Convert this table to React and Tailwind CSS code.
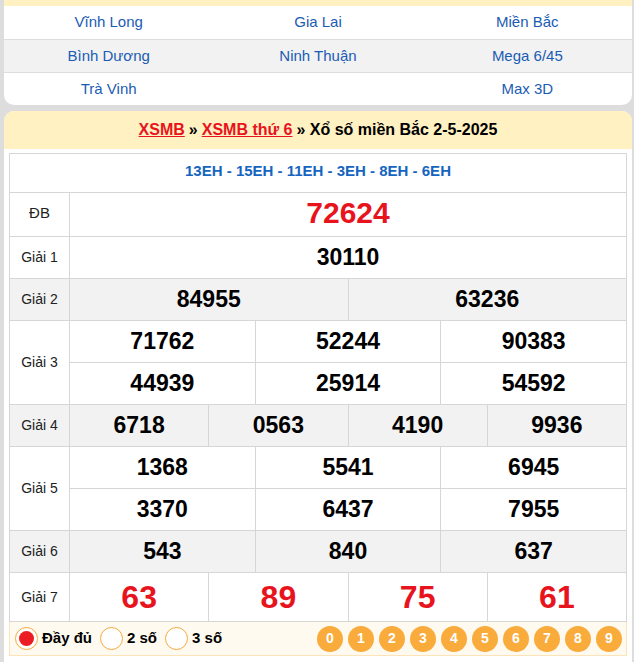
import React from 'react';

const SANS = "font-['Liberation_Sans',Arial,sans-serif]";

const NAV = [
  ['Vĩnh Long', 'Gia Lai', 'Miền Bắc'],
  ['Bình Dương', 'Ninh Thuận', 'Mega 6/45'],
  ['Trà Vinh', '', 'Max 3D'],
];

// mỗi giải: danh sách các hàng con, mỗi hàng con là mảng số
const PRIZES = [
  { label: 'Giải 1', rows: [['30110']] },
  { label: 'Giải 2', rows: [['84955', '63236']], gray: true },
  { label: 'Giải 3', rows: [['71762', '52244', '90383'], ['44939', '25914', '54592']] },
  { label: 'Giải 4', rows: [['6718', '0563', '4190', '9936']], gray: true },
  { label: 'Giải 5', rows: [['1368', '5541', '6945'], ['3370', '6437', '7955']] },
  { label: 'Giải 6', rows: [['543', '840', '637']], gray: true },
];

function PrizeRow({ label, rows, gray }) {
  return (
    <div className={`flex border-t border-[#d6d6d6] ${gray ? 'bg-[#f2f2f2]' : 'bg-white'}`}>
      <div className="w-[60px] shrink-0 border-r border-[#d6d6d6] flex items-center justify-center text-[14px] text-[#222]">
        {label}
      </div>
      <div className="flex-1 flex flex-col">
        {rows.map((r, i) => (
          <div key={i} className={`flex ${i > 0 ? 'border-t border-[#d6d6d6] h-[42px]' : 'h-[41px]'}`}>
            {r.map((n, j) => (
              <div
                key={j}
                className={`flex-1 flex items-center justify-center text-[23px] font-bold text-black ${j > 0 ? 'border-l border-[#d6d6d6]' : ''}`}
              >
                {n}
              </div>
            ))}
          </div>
        ))}
      </div>
    </div>
  );
}

function Radio({ checked, label }) {
  return (
    <div className="flex items-center gap-[4px]">
      <div className="w-[23px] h-[23px] rounded-full border border-[#f7a93b] bg-white flex items-center justify-center">
        {checked && <div className="w-[15px] h-[15px] rounded-full bg-[#ec1c24]" />}
      </div>
      <span className="text-[15px] font-bold text-black">{label}</span>
    </div>
  );
}

export default function App() {
  return (
    <div className={`min-h-[662px] bg-[#dddddd] pl-[4px] pr-[2px] ${SANS}`}>
      {/* các tỉnh */}
      <div className="bg-white border-t-[6px] border-[#fff1c2] rounded-b-[10px] overflow-hidden">
        {NAV.map((row, i) => (
          <div
            key={i}
            className={`grid grid-cols-3 h-[33px] ${i > 0 ? 'border-t border-[#dddddd]' : ''} ${i === 1 ? 'bg-[#f2f2f2]' : ''}`}
          >
            {row.map((t, j) => (
              <div key={j} className="flex items-center justify-center text-[15px] text-[#1a5cb3]">
                {t}
              </div>
            ))}
          </div>
        ))}
      </div>

      {/* kết quả */}
      <div className="mt-[6px] bg-white rounded-t-[10px] overflow-hidden pb-[8px]">
        <div className="h-[38px] bg-[#fff1c2] flex items-center justify-center text-[16px] font-bold text-black">
          <a className="text-[#e8141d] underline">XSMB</a>
          <span className="mx-[4px]">»</span>
          <a className="text-[#e8141d] underline">XSMB thứ 6</a>
          <span className="ml-[4px]">» Xổ số miền Bắc 2-5-2025</span>
        </div>

        <div className="px-[5px] pt-[4px]">
          <div className="border border-[#d6d6d6]">
            <div className="h-[38px] flex items-center justify-center text-[15px] font-bold text-[#1565c0] pb-[3px]">
              13EH - 15EH - 11EH - 3EH - 8EH - 6EH
            </div>
            <div className="flex border-t border-[#d6d6d6] h-[44px]">
              <div className="w-[60px] shrink-0 border-r border-[#d6d6d6] flex items-center justify-center text-[15px] text-[#222] pb-[3px]">
                ĐB
              </div>
              <div className="flex-1 flex items-center justify-center text-[30px] font-bold text-[#e8141d] pb-[4px]">
                72624
              </div>
            </div>
            {PRIZES.map((p) => (
              <PrizeRow key={p.label} {...p} />
            ))}
            <div className="flex border-t border-[#d6d6d6] h-[49px]">
              <div className="w-[60px] shrink-0 border-r border-[#d6d6d6] flex items-center justify-center text-[14px] text-[#222]">
                Giải 7
              </div>
              <div className="flex-1 flex">
                {['63', '89', '75', '61'].map((n, j) => (
                  <div
                    key={j}
                    className={`flex-1 flex items-center justify-center text-[32px] font-bold text-[#e8141d] ${j > 0 ? 'border-l border-[#d6d6d6]' : ''}`}
                  >
                    {n}
                  </div>
                ))}
              </div>
            </div>
          </div>

          <div className="h-[34px] border-x border-b border-[#fde3b8] bg-[#fffaef] flex items-center justify-between pl-[5px] pr-[4px]">
            <div className="flex items-center gap-[8px]">
              <Radio checked label="Đầy đủ" />
              <Radio label="2 số" />
              <Radio label="3 số" />
            </div>
            <div className="flex gap-[5px]">
              {[0, 1, 2, 3, 4, 5, 6, 7, 8, 9].map((d) => (
                <div
                  key={d}
                  className="w-[26px] h-[26px] rounded-full bg-[#f9ab3c] flex items-center justify-center text-white text-[14px] font-bold"
                >
                  {d}
                </div>
              ))}
            </div>
          </div>
        </div>
      </div>
    </div>
  );
}
